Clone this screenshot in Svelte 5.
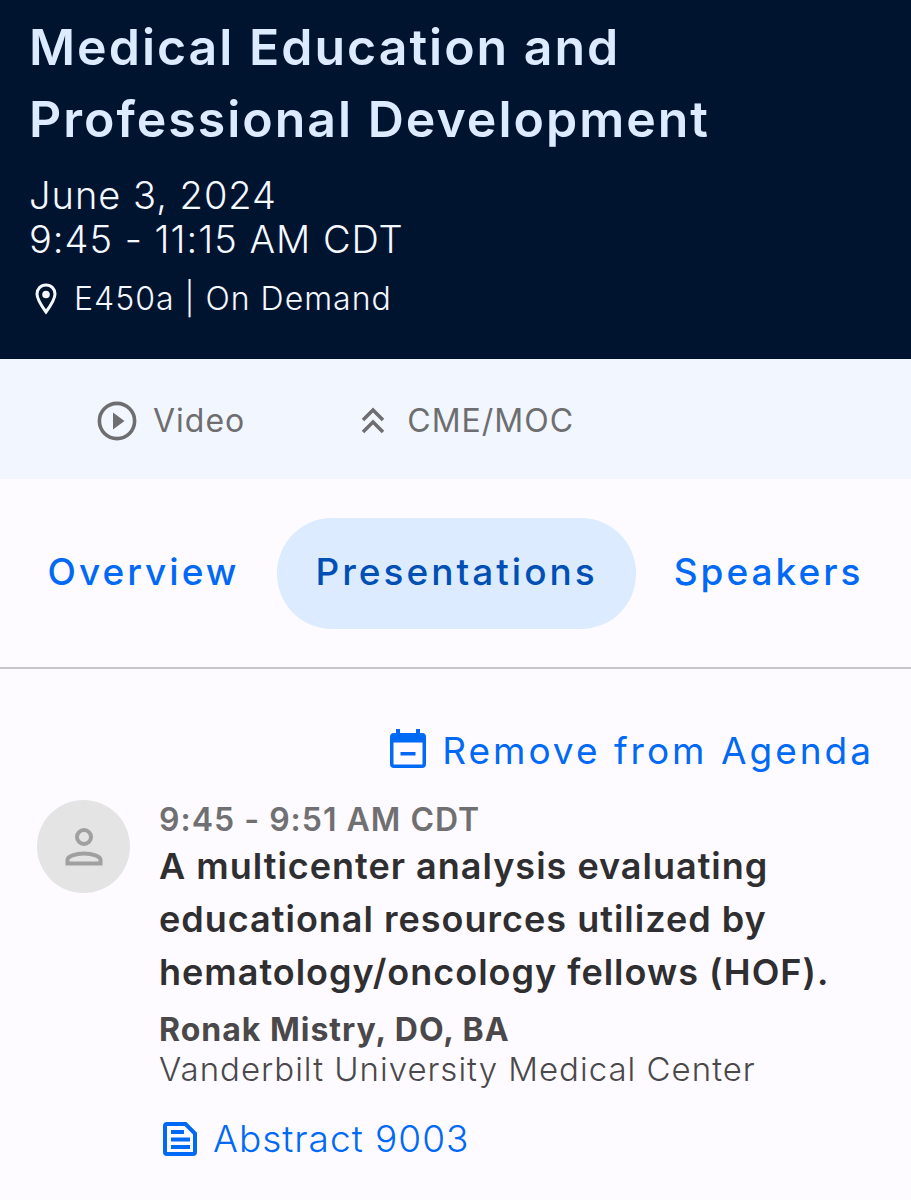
<script>
  let activeTab = $state("Presentations");

  const tabs = ["Overview", "Presentations", "Speakers"];
</script>

<main>
  <header>
    <h1>Medical Education and Professional Development</h1>
    <p class="date">June 3, 2024<br />9:45 - 11:15 AM CDT</p>
    <p class="location">
      <svg width="24" height="34" viewBox="0 0 24 34" fill="none" aria-hidden="true">
        <path d="M12 3C6.700 3 3 7 3 12c0 5.500 5 12.500 9 18 4-5.500 9-12.500 9-18 0-5-3.700-9-9-9z" stroke="currentColor" stroke-width="3" />
        <circle cx="12" cy="12.500" r="3.800" fill="currentColor" />
      </svg>
      E450a | On Demand
    </p>
  </header>

  <ul class="features">
    <li>
      <svg width="40" height="40" viewBox="0 0 40 40" fill="none" aria-hidden="true">
        <circle cx="20" cy="20" r="17.600" stroke="currentColor" stroke-width="3.600" />
        <path d="M16 11.500v17L27.500 20z" fill="currentColor" />
      </svg>
      Video
    </li>
    <li class="credit">
      <svg width="24" height="28" viewBox="0 0 24 28" fill="none" stroke="currentColor" stroke-width="3.500" aria-hidden="true">
        <path d="M2 13L12 3l10 10M2 25l10-10 10 10" />
      </svg>
      CME/MOC
    </li>
  </ul>

  <nav>
    {#each tabs as tab}
      <button
        type="button"
        class:active={activeTab === tab}
        aria-pressed={activeTab === tab}
        onclick={() => (activeTab = tab)}>{tab}</button>
    {/each}
  </nav>

  <section>
    <button type="button" class="agenda">
      <svg width="36" height="39" viewBox="0 0 36 39" fill="currentColor" aria-hidden="true">
        <path fill-rule="evenodd" d="M6 0h4v4h16V0h4v4h2q4 0 4 4v27q0 4-4 4H4q-4 0-4-4V8q0-4 4-4h2zM3.500 13.500v22h29v-22zM10.500 23h15v3.500h-15z" />
      </svg>
      Remove from Agenda
    </button>

    <article>
      <div class="avatar">
        <svg width="38" height="38" viewBox="0 0 38 38" fill="none" stroke="currentColor" stroke-width="4" aria-hidden="true">
          <circle cx="19" cy="9" r="7" />
          <path d="M2.500 35.500V32c0-3.500 8-6.500 16.500-6.500s16.500 3 16.500 6.500v3.500z" />
        </svg>
      </div>
      <div class="details">
        <p class="time">9:45 - 9:51 AM CDT</p>
        <h2>A multicenter analysis evaluating educational resources utilized by hematology/oncology fellows (HOF).</h2>
        <p class="speaker">Ronak Mistry, DO, BA</p>
        <p class="school">Vanderbilt University Medical Center</p>
        <a href="#abstract">
          <svg width="34" height="34" viewBox="0 0 34 34" fill="none" stroke="currentColor" stroke-width="4" aria-hidden="true">
            <path d="M4 2h18.500L32 11.500V30q0 2-2 2H4q-2 0-2-2V4q0-2 2-2zM8 10h13M8 17.500h19M8 25h19" />
          </svg>
          Abstract 9003
        </a>
      </div>
    </article>
  </section>
</main>

<style>
  :global(body) {
    margin: 0;
    background: #fdfbff;
  }
  main {
    font-family: Inter, "Liberation Sans", sans-serif;
    color: #2f2e30;
  }
  h1,
  h2,
  p,
  ul {
    margin: 0;
    padding: 0;
  }
  svg {
    flex-shrink: 0;
  }
  header {
    padding: 11px 29px 38px;
    background: #00132f;
    color: #f4f8ff;
  }
  h1 {
    max-width: 760px;
    font-size: 50px;
    font-weight: 600;
    line-height: 72px;
    letter-spacing: 2px;
    color: #dcebff;
  }
  .date {
    margin-top: 18px;
    font-size: 38px;
    font-weight: 300;
    line-height: 44px;
    letter-spacing: 1px;
  }
  .location {
    display: flex;
    align-items: center;
    gap: 16px;
    margin-top: 16px;
    padding-left: 5px;
    font-size: 32px;
    font-weight: 300;
    line-height: 44px;
    letter-spacing: 1px;
  }
  .features {
    display: flex;
    gap: 116px;
    padding: 42px 97px 38px;
    background: #f2f7ff;
    color: #6e6e70;
    font-size: 32px;
    line-height: 40px;
    letter-spacing: 1px;
    list-style: none;
  }
  .features li {
    display: flex;
    align-items: center;
    gap: 16px;
  }
  .features .credit {
    gap: 22px;
  }
  button {
    border: none;
    background: transparent;
    font-family: inherit;
    color: #0069f5;
    cursor: pointer;
  }
  nav {
    display: flex;
    justify-content: center;
    padding: 39px 0 38px;
    border-bottom: 2px solid #c6c5c8;
  }
  nav button {
    padding: 0 38px 4px;
    border-radius: 55px;
    font-size: 37px;
    font-weight: 500;
    line-height: 107px;
    letter-spacing: 3px;
  }
  nav button.active {
    background: #dcebff;
    color: #004fb5;
  }
  section {
    padding: 60px 37px 40px;
  }
  .agenda {
    display: flex;
    align-items: flex-start;
    gap: 16px;
    margin-left: auto;
    padding: 0;
    font-size: 37px;
    line-height: 44px;
    letter-spacing: 3px;
  }
  article {
    display: flex;
    gap: 29px;
    margin-top: 27px;
  }
  .avatar {
    display: flex;
    flex-shrink: 0;
    align-items: center;
    justify-content: center;
    width: 93px;
    height: 93px;
    border-radius: 50%;
    background: #e4e4e4;
    color: #a0a0a0;
  }
  .time {
    font-size: 32px;
    font-weight: 600;
    line-height: 40px;
    letter-spacing: 1px;
    color: #706f71;
  }
  h2 {
    font-size: 36px;
    font-weight: 600;
    line-height: 53px;
    letter-spacing: 1px;
  }
  .speaker {
    margin-top: 11px;
    font-size: 32px;
    font-weight: 700;
    line-height: 40px;
    letter-spacing: 1px;
    color: #4a484a;
  }
  .school {
    font-size: 33px;
    font-weight: 300;
    line-height: 38px;
    letter-spacing: 1px;
    color: #4a484a;
  }
  a {
    display: inline-flex;
    align-items: center;
    gap: 16px;
    margin-top: 29px;
    padding-left: 4px;
    font-size: 37px;
    font-weight: 300;
    line-height: 44px;
    letter-spacing: 1px;
    color: #0069f5;
    text-decoration: none;
  }
</style>
